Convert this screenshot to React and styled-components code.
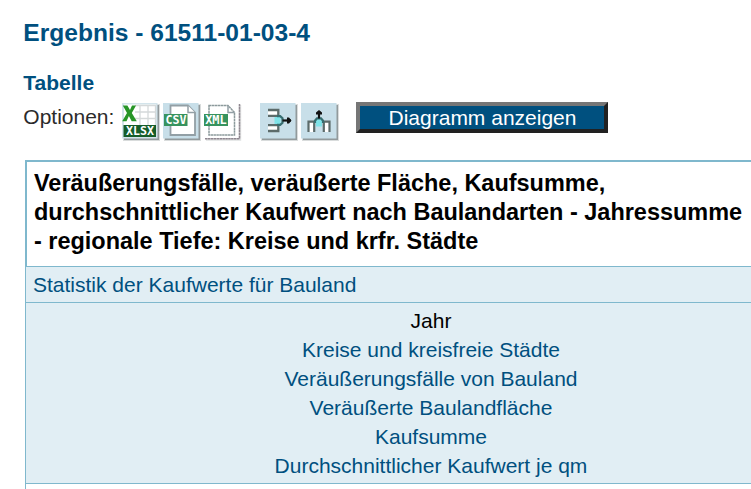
import React from "react";
import styled, { createGlobalStyle } from "styled-components";

const GlobalStyle = createGlobalStyle`
  html, body { margin: 0; padding: 0; background: #fff; overflow: hidden; }
  body { font-family: "Liberation Sans", Arial, sans-serif; font-size: 21px; line-height: 29px; color: #2b2b2b; }
`;

const Page = styled.main`
  width: 751px;
  height: 489px;
  overflow: hidden;
  box-sizing: border-box;
  padding: 18px 0 0 23.3px;
`;

const Title = styled.h1`
  margin: 0 0 20px;
  font-size: 24.57px;
  line-height: 30px;
  color: #00507f;
`;

const Subtitle = styled.h2`
  margin: 0;
  font-size: 21px;
  line-height: 29px;
  color: #00507f;
`;

const Options = styled.div`
  display: flex;
  align-items: flex-start;
  height: 63px;
  padding-top: 5px;
  box-sizing: border-box;
`;

const Label = styled.span`
  width: 98.7px;
`;

const IconGroup = styled.div`
  display: flex;
  gap: 3px;
  margin-right: ${(p) => p.$gap}px;
`;

const Icon = styled.svg`
  display: block;
  width: 38px;
  height: 38px;
  margin-top: 1px;
`;

const ChartButton = styled.button`
  width: 252px;
  height: 31px;
  padding: 0 0 0 1px;
  border: 4px solid;
  border-color: #767676 #212121 #212121 #767676;
  background: #00507f;
  color: #fff;
  font: 21px/23px "Liberation Sans", Arial, sans-serif;
`;

const Table = styled.section`
  margin-left: 1.7px;
  width: 760px;
  border-left: 1px solid #7fb8cd;
`;

const Caption = styled.h3`
  margin: 0;
  height: 106px;
  box-sizing: border-box;
  padding: 7px 0 0 7px;
  border-top: 2px solid #7fb8cd;
  border-left: 1px solid #7fb8cd;
  font-size: 23.48px;
  line-height: 29px;
  color: #000;
  white-space: nowrap;
`;

const Line = styled.span`
  display: block;
`;

const Band = styled.div`
  box-sizing: border-box;
  height: ${(p) => p.$height}px;
  padding: 3px 0 0 7px;
  border-top: 1px solid #7fb8cd;
  background: #e1eef4;
`;

const HeaderList = styled.div`
  display: flex;
  flex-direction: column;
  align-items: center;
  width: 796px;
`;

const TableLink = styled.a`
  color: #00507f;
  text-decoration: none;
`;

const Year = styled.span`
  color: #000;
`;

const Rest = styled.div`
  height: 8px;
  border-top: 1px solid #7fb8cd;
`;

const IconText = styled.text`
  fill: #fff;
  font-family: "DejaVu Sans Mono", monospace;
  font-size: 11.5px;
  font-weight: bold;
`;

function Shadow() {
  return (
    <>
      <rect x="1" y="1" width="37" height="37" fill="#d9dcdc" />
      <rect x="2" y="2" width="35" height="35" fill="#929a9c" />
    </>
  );
}

function XlsxIcon() {
  return (
    <Icon viewBox="0 0 38 38" role="img" aria-label="XLSX">
      <Shadow />
      <rect width="35.5" height="35.5" fill="#d3e4eb" />
      <rect x="2" y="1.5" width="32" height="21" fill="#fff" />
      <path d="M18 2v20M26 2v20M33.5 2v20M13 2.5h21M13 9h21M13 15.5h21" stroke="#d5d9da" strokeWidth="1.3" fill="none" />
      <path d="M.8 2.5h4.6l2.6 4.6 2-4.6h4L9.8 10l5 8.3H9.7L6.9 13l-2.4 5.3H.2L5 10z" fill="#279527" />
      <rect x="1.5" y="22" width="32.5" height="12" fill="#155d29" />
      <IconText x="4" y="32.2" textLength="28" lengthAdjust="spacingAndGlyphs">XLSX</IconText>
    </Icon>
  );
}

function CsvIcon() {
  return (
    <Icon viewBox="0 0 38 38" role="img" aria-label="CSV">
      <Shadow />
      <rect width="35.5" height="35.5" fill="#c8dfe9" />
      <path d="M7.5 2.5h17.5l7 7v22.5H7.5z" fill="#fff" stroke="#929fa5" strokeWidth="1.8" />
      <path d="M25 2.5v7h7" fill="#fff" stroke="#929fa5" strokeWidth="1.5" />
      <rect x="1" y="11" width="23.5" height="12" fill="#37935e" />
      <IconText x="2.5" y="21.2" textLength="21" lengthAdjust="spacingAndGlyphs">CSV</IconText>
    </Icon>
  );
}

function XmlIcon() {
  return (
    <Icon viewBox="0 0 38 38" role="img" aria-label="XML">
      <path d="M2 36.5h34V2" fill="none" stroke="#e0e2e2" strokeWidth="2.4" />
      <path d="M1 35.7h34.5V1" fill="none" stroke="#8f8790" strokeWidth="1.5" strokeDasharray="2.5 .4" />
      <path d="M5 2.5h19l6.5 7v22.5H5z" fill="#fff" stroke="#8c9a9c" strokeWidth="1.5" strokeDasharray="2.5 .4" />
      <path d="M24 2.5v7h6.5" fill="none" stroke="#929fa5" strokeWidth="1.5" />
      <rect x="0" y="11" width="24" height="12" fill="#37935e" />
      <IconText x="1.2" y="21.2" textLength="21.5" lengthAdjust="spacingAndGlyphs">XML</IconText>
    </Icon>
  );
}

function RowsIcon() {
  return (
    <Icon viewBox="0 0 38 38" role="img" aria-label="Zeilen">
      <Shadow />
      <rect width="35.5" height="35.5" fill="#c8dfe9" />
      <path d="M8 7h10.3v5.8H8M8 22.2h10.3V28H8" fill="#fff" stroke="#5c6b6a" strokeWidth="2.3" />
      <path d="M14.5 14h6v7h-6z" fill="#7fe3e8" />
      <path d="M17 13.2h3.2l2.3 2v4.6l-2.3 2H17" fill="none" stroke="#376d70" strokeWidth="2.2" />
      <path d="M22.5 17.5h8.5" stroke="#111" strokeWidth="2.2" />
      <path d="M27 14.5h2l2.5 3-2.5 3h-2z" fill="#111" />
    </Icon>
  );
}

function ColumnsIcon() {
  return (
    <Icon viewBox="0 0 38 38" role="img" aria-label="Spalten">
      <Shadow />
      <rect width="35.5" height="35.5" fill="#c8dfe9" />
      <path d="M7.5 29V18.7h5.7V29M22.8 29V18.7h5.7V29" fill="#fff" stroke="#5c6b6a" strokeWidth="2.2" />
      <path d="M15 16h6v7.5h-6z" fill="#7fe3e8" />
      <path d="M14 20v-2.3l2-2.4h4l2 2.4V20" fill="none" stroke="#376d70" strokeWidth="2.2" />
      <path d="M18 15.5V8" stroke="#111" strokeWidth="2.2" />
      <path d="M15 11.5v-2L18 7l3 2.5v2z" fill="#111" />
    </Icon>
  );
}

const headings = [
  "Kreise und kreisfreie Städte",
  "Veräußerungsfälle von Bauland",
  "Veräußerte Baulandfläche",
  "Kaufsumme",
  "Durchschnittlicher Kaufwert je qm",
];

export default function App() {
  return (
    <>
      <GlobalStyle />
      <Page>
        <Title>Ergebnis - 61511-01-03-4</Title>
        <Subtitle>Tabelle</Subtitle>
        <Options>
          <Label>Optionen:</Label>
          <IconGroup $gap={18}>
            <XlsxIcon />
            <CsvIcon />
            <XmlIcon />
          </IconGroup>
          <IconGroup $gap={17}>
            <RowsIcon />
            <ColumnsIcon />
          </IconGroup>
          <ChartButton type="button">Diagramm anzeigen</ChartButton>
        </Options>
        <Table>
          <Caption>
            <Line>Veräußerungsfälle, veräußerte Fläche, Kaufsumme,</Line>
            <Line>durchschnittlicher Kaufwert nach Baulandarten - Jahressumme</Line>
            <Line>- regionale Tiefe: Kreise und krfr. Städte</Line>
          </Caption>
          <Band $height={36}>
            <TableLink>Statistik der Kaufwerte für Bauland</TableLink>
          </Band>
          <Band $height={181}>
            <HeaderList>
              <Year>Jahr</Year>
              {headings.map((text) => (
                <TableLink key={text}>{text}</TableLink>
              ))}
            </HeaderList>
          </Band>
          <Rest />
        </Table>
      </Page>
    </>
  );
}
